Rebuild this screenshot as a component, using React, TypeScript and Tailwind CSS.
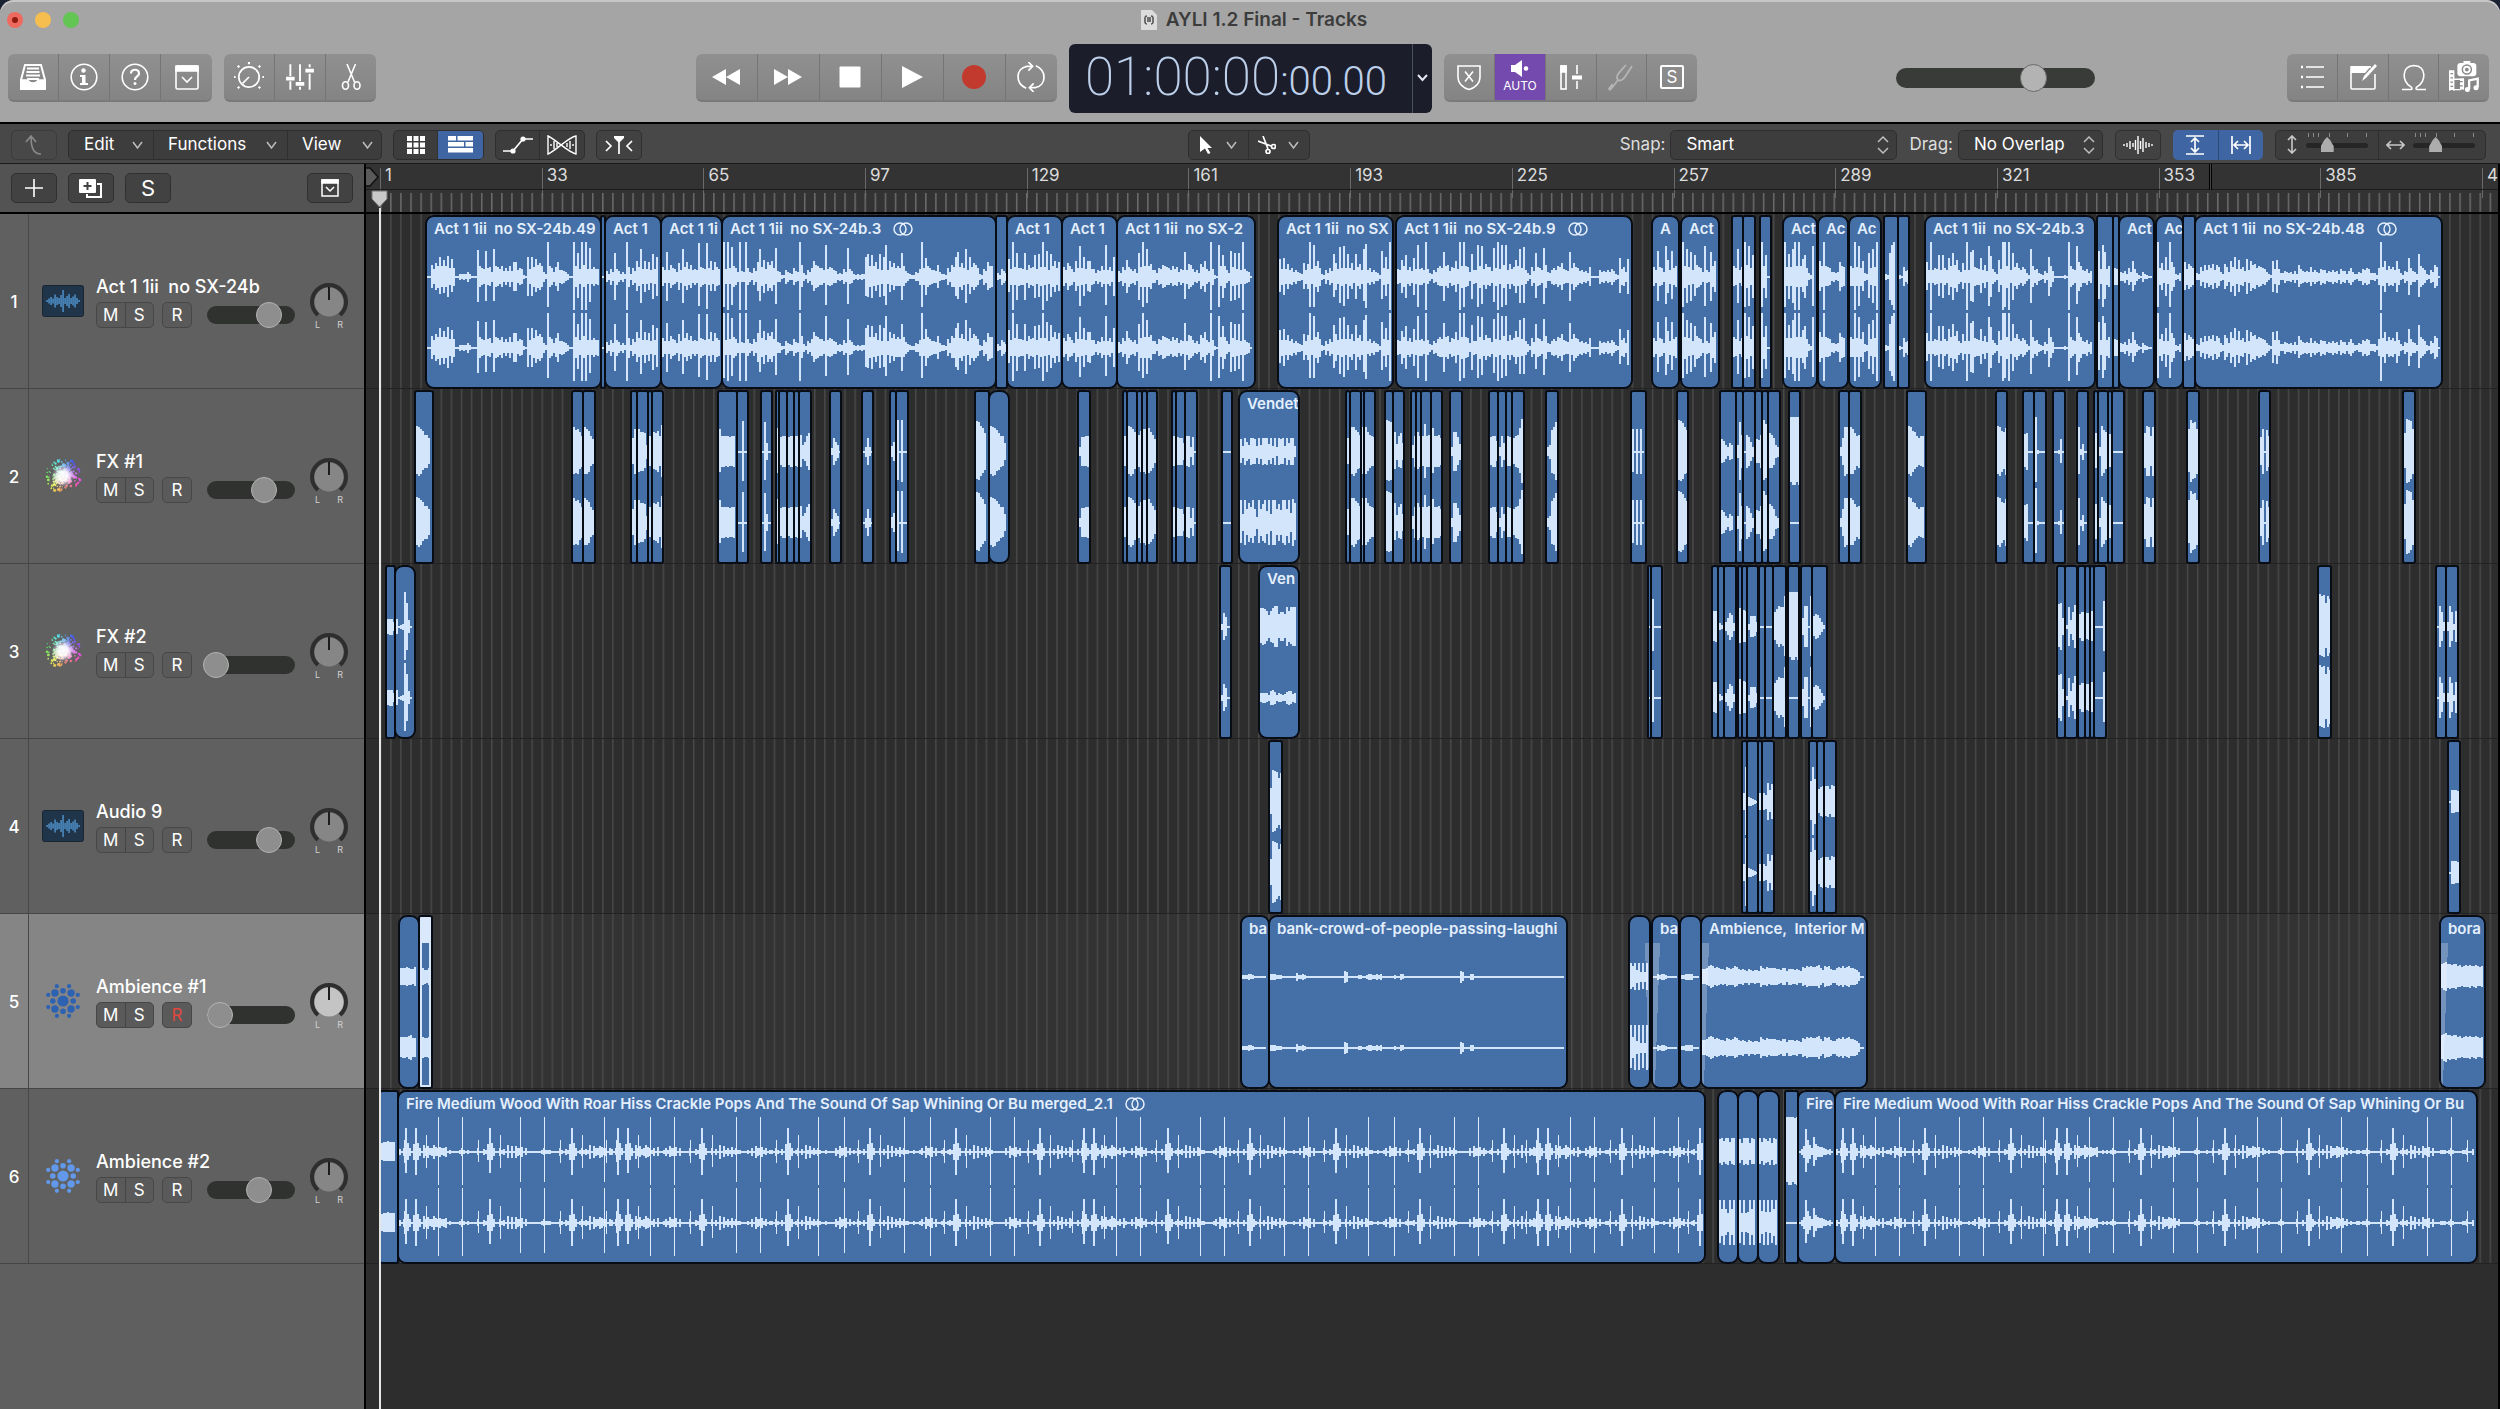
import React from 'react';

const BAR_WIDTH = 161.7 / 32;
const PANEL_WIDTH = 366;
const ORIGIN = 14;

type Region = {
  x: number;
  end: number;
  wave: string;
  right?: string;
  label?: string;
  stereo?: boolean;
  fade?: 'in' | 'out';
  fire?: boolean;
  selected?: boolean;
};

type TrackData = {
  name: string;
  icon: 'audio' | 'fx' | 'ambience';
  volume: number;
  selected?: boolean;
  rough?: boolean;
  regions: Region[];
};

// Wave strings are base 36 peak heights, spread evenly over the region.
const r = (x: number, end: number, wave: string, extra: Partial<Region> = {}): Region => ({ x, end, wave, ...extra });

const TRACKS: TrackData[] = [
  {
    name: 'Act 1 1ii  no SX-24b',
    icon: 'audio',
    volume: 76,
    rough: true,
    regions: [
      r(426, 601, '0cekhli1335' + '11r9qasab9bff92kkie5z9af751zozzta8', { label: 'Act 1 1ii  no SX-24b.49' }),
      r(601, 605, '1'),
      r(605, 661, '68o65z39gsgfnk', { label: 'Act 1' }),
      r(661, 722, 'apc8esfc8y9ygf8', { label: 'Act 1 1i' }),
      r(722, 996, 'zzu9z6z59fshfgt62749' + '6z479gb9wa9648t8333knmfnkwgebob4258zj97c539ckpeskec38fb', { label: 'Act 1 1ii  no SX-24b.3', stereo: true }),
      r(996, 1007, '484'),
      r(1007, 1062, 'izo9ocamnzqngf', { label: 'Act 1' }),
      r(1062, 1117, 'ae8gvkgg87bwak', { label: 'Act 1' }),
      r(1117, 1255, '6ah88ozsd79cb9ba8pd87dg6z2wm7qooz60', { label: 'Act 1 1ii  no SX-2' }),
      r(1278, 1393, 'ijd974edzwg379neuvnendsx974qkz', { label: 'Act 1 1ii  no SX' }),
      r(1396, 1632, '8hmajw9z479bpcagzzan7wvdatzwwdahsu4ao9t579be7pe976a11767' + '83jai', { label: 'Act 1 1ii  no SX-24b.9', stereo: true }),
      r(1652, 1679, 'aq9vhqb', { label: 'A' }),
      r(1681, 1719, 'zspmc9v7pg', { label: 'Act' }),
      r(1732, 1743, 'bsa'),
      r(1743, 1755, 'zvm'),
      r(1760, 1771, 'zm11'),
      r(1783, 1817, 'znszzim4v', { label: 'Act' }),
      r(1818, 1848, 'gza955fa', { label: 'Ac' }),
      r(1849, 1881, 'bzvg4osz', { label: 'Ac' }),
      r(1884, 1898, '3owz'),
      r(1898, 1909, '2a7'),
      r(1925, 2095, 'fz9mm9joh7ezpr9jcvl5hzzzoe9a4sb836kb1112z8vf786', { label: 'Act 1 1ii  no SX-24b.3' }),
      r(2097, 2113, 'qwpb'),
      r(2113, 2119, '98'),
      r(2119, 2154, '569g42521', { label: 'Act' }),
      r(2156, 2183, 'zekzf34', { label: 'Ac' }),
      r(2183, 2195, 'fd9'),
      r(2195, 2442, '4accdc5d5gkhaigdba83gh46456c66a7487676866935894' + '49zgbag46j95n937c1', { label: 'Act 1 1ii  no SX-24b.48', stereo: true }),
    ],
  },
  {
    name: 'FX #1',
    icon: 'fx',
    volume: 68,
    regions: [
      r(415, 433, 'qpnlhhe7'), r(572, 583, 'pnkg'), r(583, 595, 'plgd'),
      r(631, 637, 'en'), r(637, 648, 'nkj7'), r(648, 652, 'g'), r(652, 663, 'klgr'),
      r(718, 737, 'nggggfggg'), r(737, 748, '01v00'), r(761, 772, '0u900'),
      r(776, 779, 'o'), r(779, 787, 'fgg'), r(787, 794, 'fgg'), r(794, 799, 'gg'), r(799, 811, 'h7agj'),
      r(830, 841, '4ea70'), r(862, 873, '05e51'), r(890, 896, '6a'), r(896, 908, 'w0w00'),
      r(975, 989, 'vuqojg'), r(989, 1009, 'qpomjgg97'), r(1078, 1090, '5ffgg'),
      r(1123, 1127, 'gk'), r(1127, 1137, 'qpnk'), r(1137, 1142, 'hl'), r(1142, 1147, 'nn'), r(1147, 1157, 'okhd8'),
      r(1172, 1176, 'g'), r(1176, 1185, 'fe9'), r(1185, 1197, 'gg5f0'), r(1222, 1232, '000'),
      r(1239, 1299, 'd6ea7eed6e7eee8e6e5ede6e9ee6e', { right: 'n9nekgne6nejncn9nnejdnnenaokn', label: 'Vendet' }),
      r(1346, 1350, 'en'), r(1350, 1361, 'ppmkh'), r(1361, 1364, 'p'), r(1364, 1375, 'pkhgf'),
      r(1385, 1393, 'wvuh'), r(1393, 1404, 'k8gj9'), r(1411, 1416, '7g'), r(1416, 1421, 'kg'), r(1421, 1431, 'gsgh7'), r(1431, 1442, 'ogghe'),
      r(1450, 1462, '5kkf8'), r(1489, 1498, 'fggb'), r(1498, 1506, '5g92'), r(1506, 1512, 'gf'), r(1512, 1524, 'eghox'),
      r(1546, 1558, '57mpu'), r(1631, 1646, 'n0n0n0n'), r(1677, 1688, 'wvtpm'),
      r(1720, 1736, 'db7597h'), r(1736, 1743, '7uh'), r(1743, 1755, '0hfa5'), r(1755, 1762, 'dh'), r(1762, 1768, 'ws'), r(1768, 1780, 'jhe752'),
      r(1789, 1800, 'zzzzz', { right: '000000' }), r(1839, 1849, '5eppp'), r(1849, 1861, 'pnjgh'), r(1907, 1926, 'qplkgegg7'),
      r(1996, 2007, 'qplko'), r(2023, 2034, 'ij000'), r(2034, 2046, 'z2000'), r(2053, 2065, '002d0'), r(2077, 2088, 'p3810'),
      r(2094, 2098, 'j2'), r(2098, 2108, '5qmkg'), r(2108, 2112, 'ic'), r(2112, 2124, '000'),
      r(2143, 2155, 'jqpgp'), r(2187, 2199, 'nwtun'), r(2259, 2270, 'fn0mg'), r(2403, 2415, 'jxwvn'),
    ],
  },
  {
    name: 'FX #2',
    icon: 'fx',
    volume: 0,
    regions: [
      r(386, 395, '8885'), r(395, 415, '81239zo710'), r(1220, 1231, '3ea10'),
      r(1259, 1299, 'jjigccgjllddffdkcgkkkf', { right: '5555378635434677452', label: 'Ven' }),
      r(1648, 1651, '0'), r(1651, 1662, 's0000'),
      r(1712, 1718, 'gg'), r(1718, 1724, '42'), r(1724, 1736, '59ec4'),
      r(1738, 1742, 'jk'), r(1742, 1747, 'hg'), r(1747, 1758, '3bbb5'), r(1759, 1765, '00'), r(1765, 1773, '000'), r(1773, 1786, 'filkkv'),
      r(1788, 1799, 'zzzzz', { right: '00000' }), r(1801, 1812, '9ll1v'), r(1812, 1827, 'bdc952'),
      r(2057, 2065, 'no9q'), r(2065, 2077, '2k7fm'), r(2078, 2085, 'dff'), r(2085, 2090, 'ee'), r(2090, 2094, 'g'), r(2094, 2106, '000q'),
      r(2318, 2331, 'xwovs'), r(2436, 2446, '0lff5m'), r(2446, 2458, '5lf3gl'),
    ],
  },
  {
    name: 'Audio 9',
    icon: 'audio',
    volume: 75,
    regions: [
      r(1269, 1282, 'ewvuot'), r(1742, 1747, '9z'), r(1747, 1758, '54321'), r(1758, 1762, '9'), r(1762, 1774, '97jci8'),
      r(1809, 1817, 'lzn'), r(1817, 1824, 'dfg'), r(1824, 1836, 'ggdhgg'), r(2448, 2460, '1cccb'),
    ],
  },
  {
    name: 'Ambience #1',
    icon: 'ambience',
    volume: 6,
    selected: true,
    regions: [
      r(399, 419, '999a988a9', { right: 'bbbbcdaab' }), r(419, 432, '9779a', { selected: true, right: 'baabe' }),
      r(1241, 1269, '22320010', { label: 'ba' }),
      r(1269, 1567, '332010142301000000000' + '600020232330012131000100000000000610300000000101000000000000000', { label: 'bank-crowd-of-people-passing-laughi' }),
      r(1629, 1650, 'ebe7e5e5ee', { right: 'nbn7n5n5nn', fade: 'out' }),
      r(1652, 1679, '032320010', { label: 'ba', fade: 'in' }), r(1680, 1701, '2333000'),
      r(1701, 1867, '89bcba988a989b878787677b98a9998799688787a9bababc9bab879a9bab997510', { label: 'Ambience,  Interior M', fade: 'in' }),
      r(2440, 2485, 'defddcddbcadbcbcbbcbabb', { label: 'bora', fade: 'in' }),
    ],
  },
  {
    name: 'Ambience #2',
    icon: 'ambience',
    volume: 61,
    regions: [
      r(380, 398, '9aabaaaa9'),
      r(398, 1705, '', { fire: true, label: 'Fire Medium Wood With Roar Hiss Crackle Pops And The Sound Of Sap Whining Or Bu merged_2.1', stereo: true }),
      r(1718, 1738, 'debe8eaeee', { right: 'nenenanenn' }), r(1738, 1758, 'd9eebe9ede', { right: 'nananbnenn' }), r(1758, 1779, 'eaedbe9ede', { right: 'ncnbnbnenn' }),
      r(1785, 1798, 'zzzzyz', { right: '000' }),
      r(1798, 1835, '136nc74f865543231', { label: 'Fire' }),
      r(1835, 2477, '', { fire: true, label: 'Fire Medium Wood With Roar Hiss Crackle Pops And The Sound Of Sap Whining Or Bu' }),
    ],
  },
];

const FIRE_TALL = [
  437, 462, 520, 544, 604, 650, 674, 735, 759, 818, 843, 904, 929, 989, 1013, 1115, 1140, 1199, 1224, 1284, 1308, 1368,
  1393, 1453, 1477, 1569, 1594, 1653, 1678, 1874, 1899, 1958, 1983, 2043, 2088, 2113, 2172, 2197, 2256, 2281, 2341, 2366,
  2426, 2450,
];
const FIRE_CLUSTER = [
  406, 416, 489, 572, 618, 628, 702, 787, 870, 956, 1040, 1084, 1094, 1167, 1250, 1336, 1420, 1504, 1538, 1548, 1621,
  1699, 1843, 1853, 1925, 2010, 2056, 2067, 2140, 2224, 2308, 2393, 2478,
];
const CLUSTER_SHAPE: [number, number][] = [[-12, 12], [-6, 3], [-2, 8], [0, 24], [2, 9], [4, 4], [10, 17], [14, 3], [18, 7], [22, 6], [26, 4], [30, 5]];
const TALL_SHAPE: [number, number][] = [[-8, 4], [-4, 6], [-2, 4], [0, 35], [2, 5], [6, 4]];

function seeded(seed: number) {
  let s = seed * 7919 + 13;
  return () => {
    s = (s * 1103515245 + 12345) % 2147483648;
    return s / 2147483648;
  };
}

function firePeaks(region: Region, cols: number) {
  const rand = seeded(region.x);
  const peaks = Array.from({ length: cols }, () => (rand() > 0.75 ? 2 : 1));
  const stamp = (at: number, shape: [number, number][]) => {
    shape.forEach(([offset, amp]) => {
      const col = Math.round((at + offset - region.x) / 2) - 1;
      if (col >= 0 && col < cols) peaks[col] = Math.max(peaks[col], amp);
    });
  };
  FIRE_TALL.forEach((at, i) => stamp(at, i % 2 ? [[-2, 2], [0, 35], [2, 2]] : TALL_SHAPE));
  FIRE_CLUSTER.forEach((at) => stamp(at, CLUSTER_SHAPE));
  return peaks;
}

function wavePeaks(wave: string, cols: number, rough: boolean, seed: number) {
  const rand = seeded(seed);
  const perCell = Math.max(1, cols / wave.length);
  return Array.from({ length: cols }, (_, i) => {
    const cell = Math.min(wave.length - 1, Math.floor((i * wave.length) / cols));
    const amp = parseInt(wave[cell], 36);
    const first = Math.floor(((i - 1) * wave.length) / cols) !== cell;
    if (perCell <= 1 || first) return Math.max(1, amp);
    // quiet passages stay dense, loud ones fall off quickly after the peak
    const level = rough ? Math.min(amp, 13) * (0.5 + rand() * 0.4) : amp * (0.8 + rand() * 0.2);
    return Math.max(1, level);
  });
}

function Waveform({ region, rough }: { region: Region; rough: boolean }) {
  const width = region.end - region.x;
  const cols = Math.max(1, Math.floor((width - (width < 14 ? 1 : 3)) / 2));
  const left = region.fire ? firePeaks(region, cols) : wavePeaks(region.wave, cols, rough, region.x);
  const right = region.right ? wavePeaks(region.right, cols, rough, region.x) : left;
  // Fire crackles are hairline spikes over a thicker noise floor.
  const isThin = (amp: number) => !!region.fire && amp > 9 && amp !== 24;
  const draw = (peaks: number[], mid: number, thin: boolean) =>
    peaks
      .map((amp, i) => {
        const size = thin || !isThin(amp) ? amp : 4;
        if (thin && !isThin(amp)) return '';
        return `M${i * 2 + 1} ${mid - Math.round(size)}V${mid + Math.max(1, Math.round(size * (i % 3 ? 0.94 : 0.86)))}`;
      })
      .join('');
  return (
    <svg className="absolute left-0 top-0" width={width} height="170" shapeRendering="crispEdges" aria-hidden="true">
      <path d={draw(left, 60, false) + draw(right, 131, false)} stroke="#d3e5fb" strokeWidth="2" />
      {region.fire && <path d={draw(left, 60, true) + draw(right, 131, true)} stroke="#ddebfd" strokeWidth="1" />}
      {region.fade === 'in' && <path d="M0 26H7L2 168H0Z" fill="#fff" fillOpacity=".25" />}
      {region.fade === 'out' && <path d={`M${width - 6} 26H${width}V168H${width - 2}Z`} fill="#fff" fillOpacity=".25" />}
    </svg>
  );
}

function RegionBlock({ region, rough }: { region: Region; rough: boolean }) {
  const width = region.end - region.x;
  const shape = width > 19 ? 'rounded-lg' : 'rounded-xs';
  return (
    <div
      className={`absolute top-[2px] h-[172px] overflow-hidden border border-[#080c14] bg-[#456fa7] shadow-[0_0_0_1px_#080c14] ${shape}`}
      style={{ left: region.x - PANEL_WIDTH, width }}
    >
      <Waveform region={region} rough={rough} />
      {region.selected && (
        <div className="absolute inset-0 border-2 border-[#d9e8fb]">
          <div className="h-6 bg-[#d9e8fb]" />
        </div>
      )}
      {region.label && (
        <div className="relative flex h-6 items-center gap-3 overflow-hidden whitespace-pre pl-[7px] text-[15px] font-semibold text-[#e4effd]">
          <span>{region.label}</span>
          {region.stereo && (
            <svg className="shrink-0" width="20" height="14" viewBox="0 0 20 14" fill="none" stroke="currentColor" strokeWidth="1.5" aria-hidden="true">
              <circle cx="7" cy="7" r="6" />
              <circle cx="13" cy="7" r="6" />
            </svg>
          )}
        </div>
      )}
    </div>
  );
}

function AudioIcon() {
  const bars = [2, 5, 8, 5, 13, 8, 6, 12, 22, 6, 10, 14, 6, 9, 13, 6, 2];
  return (
    <svg width="42" height="32" viewBox="0 0 42 32" aria-hidden="true">
      <rect x=".5" y=".5" width="41" height="31" rx="2" fill="#20344a" stroke="#182534" />
      {bars.map((h, i) => (
        <rect key={i} x={4.5 + i * 2} y={16 - h / 2} width="1.1" height={h} fill="#5fb0f4" />
      ))}
    </svg>
  );
}

function FxIcon() {
  const rand = seeded(5);
  const dots = Array.from({ length: 230 }, () => {
    const angle = rand() * Math.PI * 2;
    const dist = 3 + rand() * 14;
    const hue = ((angle * 180) / Math.PI + 290) % 360;
    return { x: 21 + Math.cos(angle) * dist * 1.05, y: 18 + Math.sin(angle) * dist, size: 0.4 + rand(), hue, light: 92 - dist * 1.9 };
  });
  return (
    <svg width="42" height="36" viewBox="0 0 42 36" aria-hidden="true">
      <defs>
        <radialGradient id="burst">
          <stop offset="0" stopColor="#fff" />
          <stop offset=".45" stopColor="#fff" stopOpacity=".85" />
          <stop offset="1" stopColor="#e9c7ff" stopOpacity="0" />
        </radialGradient>
      </defs>
      {dots.map((d, i) => (
        <circle key={i} cx={d.x} cy={d.y} r={d.size} fill={`hsl(${d.hue} 75% ${d.light}%)`} />
      ))}
      <circle cx="21" cy="18" r="11" fill="url(#burst)" />
    </svg>
  );
}

function AmbienceIcon({ color }: { color: string }) {
  const ring = [0, 1, 2, 3, 4, 5, 6, 7];
  return (
    <svg width="42" height="36" viewBox="-21 -18 42 36" fill={color} aria-hidden="true">
      <circle r="5.6" />
      {ring.map((i) => {
        const a = (i * Math.PI) / 4;
        const b = a + Math.PI / 8;
        const dist = i % 2 ? 11.4 : 10.2;
        return (
          <React.Fragment key={i}>
            <circle cx={Math.cos(a) * dist} cy={Math.sin(a) * dist} r={i % 2 ? 3.7 : 2.8} />
            <circle cx={Math.cos(b) * 16} cy={Math.sin(b) * 16} r="2.1" />
          </React.Fragment>
        );
      })}
    </svg>
  );
}

function PanKnob({ bright }: { bright?: boolean }) {
  return (
    <div className="mt-2 flex w-[38px] flex-col items-center">
      <svg width="38" height="38" viewBox="0 0 38 38" role="img" aria-label="Pan">
        <path d="M8 33A17 17 0 1 1 30 33" fill="none" stroke="#2e2e2e" strokeWidth="4" />
        <circle cx="19" cy="20" r="14.5" fill={bright ? '#c4c4c4' : '#868686'} />
        <path d="M19 5V18" stroke="#1c1c1c" strokeWidth="2" />
      </svg>
      <div className="flex w-7 justify-between text-[9px] leading-[9px] text-[#d0d0d0]">
        <span>L</span>
        <span>R</span>
      </div>
    </div>
  );
}

function TrackHeader({ track, index }: { track: TrackData; index: number }) {
  return (
    <div className={`flex h-[175px] border-b border-[#454545] ${track.selected ? 'bg-[#858585]' : 'bg-[#606060]'}`}>
      <div className="flex w-[29px] shrink-0 items-center justify-center border-r border-[#484848] pt-1 text-[17px] font-medium text-white">
        {index + 1}
      </div>
      <div className="flex flex-1 items-center pl-[13px]">
        {track.icon === 'audio' && <AudioIcon />}
        {track.icon === 'fx' && <FxIcon />}
        {track.icon === 'ambience' && <AmbienceIcon color={track.selected ? '#2d62b3' : '#6198ea'} />}
        <div className="ml-3 w-[214px]">
          <div className="h-[27px] whitespace-pre text-[18px] leading-[24px] font-medium text-white">{track.name}</div>
          <div className="flex items-center">
            <div className="flex h-[26px] w-[58px] divide-x divide-[#444] overflow-hidden rounded-[5px] border border-[#474747] bg-[#5a5a5a] text-[17px] text-white">
              <button className="flex-1" aria-label={`Mute ${track.name}`}>M</button>
              <button className="flex-1" aria-label={`Solo ${track.name}`}>S</button>
            </div>
            <button
              className={`ml-2 h-[26px] w-[30px] rounded-[5px] border border-[#474747] bg-[#5a5a5a] text-[17px] ${track.selected ? 'text-[#e0483f]' : 'text-white'}`}
              aria-label={`Record enable ${track.name}`}
            >
              R
            </button>
            <div className="ml-[15px] flex h-[18px] w-[88px] items-center rounded-full bg-[#30322f]">
              <input
                type="range"
                defaultValue={track.volume}
                aria-label={`Volume ${track.name}`}
                className="-mx-1 h-[26px] w-24 shrink-0 appearance-none bg-transparent [&::-webkit-slider-thumb]:h-[26px] [&::-webkit-slider-thumb]:w-[26px] [&::-webkit-slider-thumb]:appearance-none [&::-webkit-slider-thumb]:rounded-full [&::-webkit-slider-thumb]:border [&::-webkit-slider-thumb]:border-[#b4b4b4] [&::-webkit-slider-thumb]:bg-[#8e8e8e]"
              />
            </div>
          </div>
        </div>
        <PanKnob bright={track.selected} />
      </div>
    </div>
  );
}

function Icon({ children, size = 28 }: { children: React.ReactNode; size?: number }) {
  return (
    <svg width={size} height={size} viewBox="0 0 28 28" fill="none" stroke="currentColor" strokeWidth="1.6" aria-hidden="true">
      {children}
    </svg>
  );
}

type Tool = { label: string; icon: React.ReactNode; active?: boolean; dim?: boolean; width?: string };

function Group({ items }: { items: Tool[] }) {
  return (
    <div className="flex h-12 shrink-0 divide-x divide-[#757575] overflow-hidden rounded-md border-b-2 border-[#7a7a7a] bg-linear-to-b from-[#909090] to-[#848484] text-white">
      {items.map((item) => (
        <button
          key={item.label}
          aria-label={item.label}
          className={`flex flex-col items-center justify-center ${item.width ?? 'w-[51px]'} ${item.active ? 'bg-[#744aae]' : ''} ${item.dim ? 'text-[#b4b4b4]' : ''}`}
        >
          {item.icon}
        </button>
      ))}
    </div>
  );
}

const leftTools: Tool[] = [
  {
    label: 'Library',
    icon: (
      <Icon>
        <path d="M6 2H22L26 17V26H2V17Z" strokeWidth="2" />
        <path d="M2 17H9C10 21 18 21 19 17H26V26H2Z" fill="currentColor" />
        <path d="M8 5.500H20M7.500 9H20.500M7 12.500H21M8 16H20" strokeWidth="2" />
      </Icon>
    ),
  },
  {
    label: 'Inspector',
    icon: (
      <Icon>
        <circle cx="14" cy="14" r="12.800" />
        <circle cx="13.500" cy="7.500" r="2.200" fill="currentColor" stroke="none" />
        <path d="M10 12H15.500V20H18V22H10V20H12V14H10Z" fill="currentColor" stroke="none" />
      </Icon>
    ),
  },
  {
    label: 'Quick Help',
    icon: (
      <Icon>
        <circle cx="14" cy="14" r="12.800" />
        <path d="M10 10.500C10 5.500 18 5.500 18 10.500C18 13.500 14 13.500 14 17" strokeWidth="2.200" />
        <circle cx="14" cy="20.500" r="1.500" fill="currentColor" stroke="none" />
      </Icon>
    ),
  },
  {
    label: 'Toolbar',
    icon: (
      <Icon>
        <rect x="3" y="3" width="22" height="23" rx="1.500" />
        <path d="M3 3H25V8H3Z" fill="currentColor" />
        <path d="M9 14L14 19L19 14" />
      </Icon>
    ),
  },
];

const viewTools: Tool[] = [
  {
    label: 'Smart Controls',
    icon: (
      <Icon size={30}>
        <circle cx="14" cy="14" r="9.500" />
        <path d="M14 14L8 20" />
        <path d="M14 0V2M1.500 14H0M28 14H26.500M3.500 3.500L5 5M24.500 3.500L23 5M3.500 24.500L5 23M24.500 24.500L23 23" strokeWidth="2" />
      </Icon>
    ),
  },
  {
    label: 'Mixer',
    icon: (
      <Icon size={30}>
        <path d="M5 2V13M5 18V26M14 2V18M14 23V26M23 2V5M23 11V26" strokeWidth="1.800" />
        <path d="M1 15.500H9M10 20.500H18M19 8H27" strokeWidth="3.500" />
      </Icon>
    ),
  },
  {
    label: 'Editors',
    width: 'w-[50px]',
    icon: (
      <Icon>
        <path d="M10 1L17.500 19M18.500 1L11 19" />
        <ellipse cx="8.500" cy="22.500" rx="3" ry="3.800" />
        <ellipse cx="20" cy="22.500" rx="3" ry="3.800" />
      </Icon>
    ),
  },
];

const transport: Tool[] = [
  { label: 'Rewind', width: 'w-[62px]', icon: <Icon><path d="M14 6V22L0 14ZM28 6V22L14 14Z" fill="currentColor" stroke="none" /></Icon> },
  { label: 'Forward', width: 'w-[62px]', icon: <Icon><path d="M0 6V22L14 14ZM14 6V22L28 14Z" fill="currentColor" stroke="none" /></Icon> },
  { label: 'Stop', width: 'w-[62px]', icon: <Icon><rect x="3.500" y="3.500" width="21" height="21" rx="1" fill="currentColor" stroke="none" /></Icon> },
  { label: 'Play', width: 'w-[62px]', icon: <Icon><path d="M4 3V25L25 14Z" fill="currentColor" stroke="none" /></Icon> },
  { label: 'Record', width: 'w-[62px]', icon: <Icon><circle cx="14" cy="14" r="12" fill="#c23a2e" stroke="none" /></Icon> },
  {
    label: 'Cycle',
    icon: (
      <Icon size={30}>
        <path d="M9.500 24.500C-1 20 -.5 6 10 4H15M18.500 3.500C29 8 28.500 22 18 24H13" />
        <path d="M11.500 0L15.500 4L11.500 8M16.500 20L12.500 24L16.500 28" />
      </Icon>
    ),
  },
];

const modeTools: Tool[] = [
  {
    label: 'Replace',
    icon: (
      <Icon>
        <path d="M3 3H25V14C25 21 19 25 14 26.500C9 25 3 21 3 14Z" />
        <path d="M10 8.500L18 18.500M18 8.500L10 18.500" />
      </Icon>
    ),
  },
  {
    label: 'Auto input monitoring',
    active: true,
    icon: (
      <>
        <svg width="22" height="17" viewBox="0 0 22 17" fill="currentColor" aria-hidden="true">
          <path d="M2 5H6L13 0V17L6 12H2Z" />
          <circle cx="17" cy="8.500" r="2.300" />
        </svg>
        <span className="text-[12px] leading-[18px]">AUTO</span>
      </>
    ),
  },
  {
    label: 'Pre fader',
    icon: (
      <Icon>
        <rect x="4" y="3" width="5" height="23" />
        <path d="M4 3H9V9H4Z" fill="currentColor" />
        <path d="M20 2V11M20 18V26" />
        <path d="M15 14.500H25" strokeWidth="4" />
      </Icon>
    ),
  },
  {
    label: 'Tuner',
    dim: true,
    width: 'w-[50px]',
    icon: (
      <Icon>
        <path d="M4 26L11 17M11 17C8 13 11 11 19 2M11 17C15 19 17 16 25 3" strokeWidth="1.800" />
        <path d="M2 27L6 21.500" strokeWidth="3" />
      </Icon>
    ),
  },
  {
    label: 'Solo',
    width: 'w-[50px]',
    icon: (
      <span className="flex h-6 w-6 items-center justify-center rounded-xs border-2 border-white text-[17px] leading-[17px]">S</span>
    ),
  },
];

const rightTools: Tool[] = [
  {
    label: 'List Editors',
    icon: (
      <Icon>
        <path d="M8 4H26M8 14H26M8 24H26" />
        <path d="M3 4H5M3 14H5M3 24H5" strokeWidth="2.500" />
      </Icon>
    ),
  },
  {
    label: 'Note Pads',
    icon: (
      <Icon>
        <path d="M26 11V25Q26 26 25 26H3Q2 26 2 25V4H22" />
        <path d="M2 3H22L16 10H2Z" fill="currentColor" stroke="none" />
        <path d="M13 18L15 13L26 1L28 3L17 15Z" fill="currentColor" stroke="none" />
      </Icon>
    ),
  },
  {
    label: 'Apple Loops',
    width: 'w-[50px]',
    icon: (
      <Icon>
        <path d="M2 26.500H10.500C12.500 26.500 12.500 24.500 10.500 23.500C2 19 1 3 14 2.500C27 3 26 19 17.500 23.500C15.500 24.500 15.500 26.500 17.500 26.500H26" />
      </Icon>
    ),
  },
  {
    label: 'Browsers',
    width: 'w-[50px]',
    icon: (
      <Icon size={32}>
        <rect x="9" y="2.500" width="15" height="10" rx="2" fill="currentColor" />
        <circle cx="16.500" cy="7.500" r="3.800" fill="#8a8a8a" stroke="#8a8a8a" />
        <circle cx="16.500" cy="7.500" r="2.500" />
        <path d="M13.500 1H19.500" strokeWidth="2.500" />
        <path d="M3 8V26M12 15V26" strokeWidth="3" strokeDasharray="2.500 1.200" />
        <path d="M1.500 8V26M5 8V26M5 16H11M5 25H11M13.500 15V25" strokeWidth="1.200" />
        <path d="M18.500 24.500V17L26 15.500V23" strokeWidth="2" />
        <circle cx="17" cy="25" r="2.200" fill="currentColor" stroke="none" />
        <circle cx="24.500" cy="23.500" r="2.200" fill="currentColor" stroke="none" />
      </Icon>
    ),
  },
];

function Chevron() {
  return (
    <svg width="11" height="8" viewBox="0 0 11 8" fill="none" stroke="#bdbdbd" strokeWidth="1.500" aria-hidden="true">
      <path d="M1 1L5.500 7L10 1" />
    </svg>
  );
}

const smallButton = 'flex h-[30px] w-[46px] shrink-0 items-center justify-center rounded-[5px] border border-[#303030] bg-[#424242] text-white';
const smallGroup = 'flex h-[30px] shrink-0 divide-x divide-[#303030] overflow-hidden rounded-[5px] border border-[#2e2e2e] bg-[#3d3d3d] text-white';

function SelectBox({ id, label, value, options, width }: { id: string; label: string; value: string; options: string[]; width: string }) {
  return (
    <div className="flex items-center gap-[5px] text-[17px] text-[#dedede]">
      <label htmlFor={id}>{label}</label>
      <div className={`relative ${width}`}>
        <select id={id} defaultValue={value} className="h-[30px] w-full appearance-none rounded-[5px] border border-[#2e2e2e] bg-[#3d3d3d] pl-[15px] text-[17px] text-white">
          {options.map((option) => (
            <option key={option}>{option}</option>
          ))}
        </select>
        <svg className="pointer-events-none absolute right-2 top-[6px]" width="12" height="18" viewBox="0 0 12 18" fill="none" stroke="#bdbdbd" strokeWidth="1.500" aria-hidden="true">
          <path d="M1 6L6 1L11 6M1 12L6 17L11 12" />
        </svg>
      </div>
    </div>
  );
}

function ZoomSlider({ label, value, children }: { label: string; value: number; children: React.ReactNode }) {
  return (
    <div className="flex flex-1 items-center justify-center gap-2">
      {children}
      <div className="relative h-[28px] w-[62px]">
        <svg className="absolute left-0 top-[2px]" width="62" height="5" stroke="#8a8a8a" shapeRendering="crispEdges" aria-hidden="true">
          <path d="M2 0V4M7 0V4M12 0V4M23 0V4M41 0V4M60 0V4" />
        </svg>
        <div className="absolute inset-x-0 top-3 h-[5px] rounded-full bg-[#262626]" />
        <input
          type="range"
          aria-label={label}
          defaultValue={value}
          className="absolute inset-0 h-[28px] w-full appearance-none bg-transparent [&::-webkit-slider-thumb]:h-[15px] [&::-webkit-slider-thumb]:w-[13px] [&::-webkit-slider-thumb]:appearance-none [&::-webkit-slider-thumb]:bg-[#adadad] [&::-webkit-slider-thumb]:[clip-path:polygon(50%_0,72%_20%,100%_62%,100%_100%,0_100%,0_62%,28%_20%)]"
        />
      </div>
    </div>
  );
}

function TopBar() {
  return (
    <header className="h-[124px] rounded-t-[14px] border-b-2 border-black bg-[#a5a5a5] shadow-[inset_0_2px_0_#c6c6c6]">
      <div className="flex h-[43px] items-center pb-1">
        <div className="flex flex-1 gap-3 pl-[7px]">
          <button aria-label="Close" className="flex h-4 w-4 items-center justify-center rounded-full bg-[#ee6a5f]">
            <span className="h-[6px] w-[6px] rounded-full bg-[#8e1a10]" />
          </button>
          <button aria-label="Minimize" className="h-4 w-4 rounded-full bg-[#f5be4f]" />
          <button aria-label="Zoom" className="h-4 w-4 rounded-full bg-[#62c554]" />
        </div>
        <h1 className="flex items-center gap-2 text-[19px] leading-[20px] font-semibold text-[#3c3c3c]">
          <svg width="18" height="20" viewBox="0 0 18 20" aria-hidden="true">
            <path d="M1 0H12L17 5V20H1Z" fill="#dcdcdc" />
            <path d="M7 6Q4.500 6 5 10Q4.500 14 7 14M11 6Q13.500 6 13 10Q13.500 14 11 14M8 7V12M10 7V12" fill="none" stroke="#555" strokeWidth="1.600" />
          </svg>
          AYLI 1.2 Final - Tracks
        </h1>
        <div className="flex-1" />
      </div>
      <div className="flex h-[70px] items-center pl-2 pr-[11px]">
        <div className="flex gap-3">
          <Group items={leftTools} />
          <Group items={viewTools} />
        </div>
        <div className="grow-45" />
        <div className="flex items-center gap-3">
          <Group items={transport} />
          <div className="flex h-[69px] w-[363px] divide-x divide-[#4b5060] rounded-md bg-[#1b1d2b] font-['Roboto','Inter',sans-serif] text-[#bdd0ea]">
            <div className="flex flex-1 items-baseline pl-4 tabular-nums">
              <span className="text-[53px] leading-[66px] font-extralight">01:00:00</span>
              <span className="text-[40px] leading-[66px] font-light">:00.00</span>
            </div>
            <button aria-label="Display mode" className="flex w-[19px] items-center justify-center">
              <svg width="11" height="8" viewBox="0 0 11 8" fill="none" stroke="#e4e8f0" strokeWidth="2" aria-hidden="true">
                <path d="M1 1L5.500 6L10 1" />
              </svg>
            </button>
          </div>
          <Group items={modeTools} />
        </div>
        <div className="grow-28" />
        <input
          type="range"
          aria-label="Master volume"
          defaultValue={72}
          className="h-[20px] w-[199px] appearance-none rounded-full bg-[#383b38] [&::-webkit-slider-thumb]:h-[28px] [&::-webkit-slider-thumb]:w-[27px] [&::-webkit-slider-thumb]:appearance-none [&::-webkit-slider-thumb]:rounded-full [&::-webkit-slider-thumb]:border [&::-webkit-slider-thumb]:border-[#6a6a6a] [&::-webkit-slider-thumb]:bg-[#b3b3b3]"
        />
        <div className="grow-27" />
        <Group items={rightTools} />
      </div>
    </header>
  );
}

function MenuBar() {
  return (
    <div className="flex h-10 items-center border-b border-[#1a1a1a] bg-[#484848] pl-[11px] pr-[14px] pt-[2px]">
      <div className="flex flex-1 gap-[11px]">
        <button aria-label="Back" className="flex h-[30px] w-[46px] items-center justify-center rounded-[5px] border border-[#3c3c3c] text-[#8b8b8b]">
          <svg width="18" height="20" viewBox="0 0 18 20" fill="none" stroke="currentColor" strokeWidth="1.600" aria-hidden="true">
            <path d="M1 7L6 1L11 7M6 1C6 12 8 19 16 19" />
          </svg>
        </button>
        <div className={`${smallGroup} text-[17px]`}>
          <button className="flex w-[85px] items-center justify-between pl-[15px] pr-[10px]">Edit<Chevron /></button>
          <button className="flex w-[134px] items-center justify-between pl-[14px] pr-[10px]">Functions<Chevron /></button>
          <button className="flex w-[93px] items-center justify-between pl-[14px] pr-[8px]">View<Chevron /></button>
        </div>
        <div className={smallGroup}>
          <button aria-label="Live Loops grid" className="flex w-[44px] items-center justify-center">
            <svg width="18" height="18" fill="currentColor" aria-hidden="true">
              <path d="M0 0H5V5H0ZM6.500 0H11.500V5H6.500ZM13 0H18V5H13ZM0 6.500H5V11.500H0ZM6.500 6.500H11.500V11.500H6.500ZM13 6.500H18V11.500H13ZM0 13H5V18H0ZM6.500 13H11.500V18H6.500ZM13 13H18V18H13Z" />
            </svg>
          </button>
          <button aria-label="Tracks view" className="flex w-[45px] items-center justify-center bg-[#3f66a2]">
            <svg width="25" height="17" fill="currentColor" aria-hidden="true">
              <path d="M0 0H8V4.500H0ZM9.500 0H25V4.500H9.500ZM0 6H16V10.500H0ZM17.500 6H25V10.500H17.500ZM0 12H25V16.500H0Z" />
            </svg>
          </button>
        </div>
        <div className={smallGroup}>
          <button aria-label="Automation" className="flex w-[44px] items-center justify-center">
            <svg width="32" height="18" viewBox="0 0 32 18" fill="none" stroke="currentColor" strokeWidth="1.700" aria-hidden="true">
              <path d="M1 15H11L21 3H31" />
              <circle cx="11" cy="15" r="2.600" fill="currentColor" stroke="none" />
              <circle cx="21" cy="3" r="2.600" fill="currentColor" stroke="none" />
            </svg>
          </button>
          <button aria-label="Flex" className="flex w-[44px] items-center justify-center">
            <svg width="30" height="20" viewBox="0 0 30 20" fill="none" stroke="currentColor" strokeWidth="1.400" aria-hidden="true">
              <path d="M1 1C8 4 22 18 29 19V1C22 2 8 16 1 19Z" />
              <path d="M4 9V11M7 6V14M10 8V12M20 8V12M23 6V14M26 9V11" />
            </svg>
          </button>
        </div>
        <button aria-label="Catch playhead" className={smallButton}>
          <svg width="28" height="20" viewBox="0 0 28 20" fill="none" stroke="currentColor" strokeWidth="1.700" aria-hidden="true">
            <path d="M1 6L6 11L1 16M27 6L22 11L27 16M14 6V19" />
            <path d="M9 1H19V3L15 7H13L9 3Z" fill="currentColor" stroke="none" />
          </svg>
        </button>
      </div>
      <div className={smallGroup}>
        <button aria-label="Pointer tool" className="flex w-[60px] items-center justify-center gap-[14px]">
          <svg width="12" height="18" viewBox="0 0 12 18" fill="currentColor" aria-hidden="true">
            <path d="M0 0L12 12H7.500L10.500 17L8 18L5 12.500L0 16Z" />
          </svg>
          <Chevron />
        </button>
        <button aria-label="Scissors tool" className="flex w-[60px] items-center justify-center gap-3">
          <svg width="18" height="18" viewBox="0 0 18 18" fill="none" stroke="currentColor" strokeWidth="1.700" aria-hidden="true">
            <path d="M5 0L10 13M0 5L13 10" />
            <circle cx="10" cy="15.500" r="2" />
            <circle cx="15.500" cy="10.500" r="2" />
          </svg>
          <Chevron />
        </button>
      </div>
      <div className="flex flex-1 items-center justify-end gap-3">
        <SelectBox id="snap" label="Snap:" value="Smart" options={['Smart', 'Bar', 'Beat', 'Off']} width="w-[227px]" />
        <SelectBox id="drag" label="Drag:" value="No Overlap" options={['No Overlap', 'Overlap', 'X-Fade']} width="w-[145px]" />
        <button aria-label="Waveform zoom" className={smallButton}>
          <svg width="30" height="20" viewBox="0 0 30 20" stroke="currentColor" strokeWidth="1.400" aria-hidden="true">
            <path d="M1 9V11M4 8V12M7 6V14M10 8V12M12.500 5V15M15 1V19M17.500 6V14M20 3V17M23 7V13M26 8V12M29 9V11" />
          </svg>
        </button>
        <div className="flex h-[30px] w-[90px] divide-x divide-[#2b4a7a] overflow-hidden rounded-[5px] bg-[#3f66a2] text-white">
          <button aria-label="Vertical auto zoom" className="flex flex-1 items-center justify-center">
            <svg width="20" height="20" viewBox="0 0 20 20" fill="none" stroke="currentColor" strokeWidth="1.700" aria-hidden="true">
              <path d="M1 1H19M1 19H19M10 3V17M6 7L10 3L14 7M6 13L10 17L14 13" />
            </svg>
          </button>
          <button aria-label="Horizontal auto zoom" className="flex flex-1 items-center justify-center">
            <svg width="20" height="20" viewBox="0 0 20 20" fill="none" stroke="currentColor" strokeWidth="1.700" aria-hidden="true">
              <path d="M1 1V19M19 1V19M3 10H17M7 6L3 10L7 14M13 6L17 10L13 14" />
            </svg>
          </button>
        </div>
        <div className="flex h-[30px] w-[211px] divide-x divide-[#303030] rounded-[5px] border border-[#2e2e2e] bg-[#3d3d3d] pr-1">
          <ZoomSlider label="Vertical zoom" value={30}>
            <svg width="12" height="19" viewBox="0 0 12 19" fill="none" stroke="#c8c8c8" strokeWidth="1.600" aria-hidden="true">
              <path d="M6 1V18M2 5L6 1L10 5M2 14L6 18L10 14" />
            </svg>
          </ZoomSlider>
          <ZoomSlider label="Horizontal zoom" value={34}>
            <svg width="19" height="12" viewBox="0 0 19 12" fill="none" stroke="#c8c8c8" strokeWidth="1.600" aria-hidden="true">
              <path d="M1 6H18M5 2L1 6L5 10M14 2L18 6L14 10" />
            </svg>
          </ZoomSlider>
        </div>
      </div>
    </div>
  );
}

function TrackToolbar() {
  return (
    <div className="flex h-[50px] items-center gap-[11px] border-b-2 border-black bg-[#535353] pl-[11px] pr-[11px]">
      <button aria-label="New track" className={smallButton}>
        <svg width="18" height="18" stroke="currentColor" strokeWidth="1.600" aria-hidden="true"><path d="M9 0V18M0 9H18" /></svg>
      </button>
      <button aria-label="Duplicate track" className={smallButton}>
        <svg width="24" height="19" viewBox="0 0 24 19" fill="none" aria-hidden="true">
          <path d="M18 5H22V18H8V15" stroke="currentColor" strokeWidth="2" />
          <rect x="0" y="0" width="17" height="14" rx="1" fill="currentColor" />
          <path d="M8.500 3V11M4.500 7H12.500" stroke="#424242" strokeWidth="2" />
        </svg>
      </button>
      <button aria-label="Global solo" className={`${smallButton} text-[22px] leading-[22px]`}>S</button>
      <button aria-label="Header options" className={`${smallButton} ml-auto`}>
        <svg width="18" height="18" viewBox="0 0 18 18" fill="none" stroke="currentColor" strokeWidth="1.500" aria-hidden="true">
          <path d="M1 1H17V17H1ZM5 8L9 12L13 8" />
          <path d="M1 1H17V4H1Z" fill="currentColor" />
        </svg>
      </button>
    </div>
  );
}

const gridLines = (color: string) => ({
  backgroundImage: `linear-gradient(90deg, ${color} 1px, transparent 2px)`,
  backgroundSize: `${BAR_WIDTH * 2}px 100%`,
});

function Ruler() {
  const marks = Array.from({ length: 14 }, (_, i) => 1 + i * 32);
  return (
    <div className="relative h-[50px] overflow-hidden border-b-2 border-black bg-[#333]">
      <svg className="absolute left-0 top-[3px]" width="13" height="20" viewBox="0 0 13 20" fill="#5a5a5a" stroke="#111" strokeWidth="1.500" aria-hidden="true">
        <path d="M0 1H4L12 10L4 19H0" />
      </svg>
      <div className="flex pl-[14px] pt-1">
        {marks.map((bar) => (
          <div key={bar} className="h-[30px] shrink-0 border-l border-[#6a6a6a] pl-1 text-[17px] leading-[14px] text-[#dcdcdc]" style={{ width: BAR_WIDTH * 32 }}>
            {bar}
          </div>
        ))}
      </div>
      <div className="absolute inset-x-0 top-[25px] h-px bg-[#1c1c1c]" />
      <div className="absolute left-[1843px] top-0 h-[26px] w-[3px] border-x border-black bg-[#444]" />
      <div className="absolute bottom-0 left-[14px] right-0 h-[19px]" style={gridLines('#6b6b6b')} />
    </div>
  );
}

function Playhead() {
  return (
    <div className="pointer-events-none absolute bottom-0 left-[5px] top-[26px] flex w-[17px] flex-col items-center">
      <svg width="17" height="18" viewBox="0 0 17 18" aria-hidden="true">
        <path d="M1 1H16V9L8.500 17L1 9Z" fill="#c9c9c9" stroke="#777" />
      </svg>
      <div className="w-[2px] flex-1 bg-[#e6e6e6]" />
    </div>
  );
}

function App() {
  return (
    <div className="flex min-h-screen flex-col bg-[#1a2233] font-['Inter','Liberation_Sans',sans-serif]">
      <TopBar />
      <MenuBar />
      <main className="flex flex-1 border-r-2 border-black bg-[#2d2d2d]">
        <section className="w-[366px] shrink-0 border-r-2 border-black bg-[#5f5f5f]">
          <TrackToolbar />
          {TRACKS.map((track, i) => (
            <TrackHeader key={track.name} track={track} index={i} />
          ))}
        </section>
        <section className="relative min-w-0 flex-1 overflow-hidden">
          <Ruler />
          {TRACKS.map((track) => (
            <div key={track.name} className={`relative h-[175px] border-b border-[#222] ${track.selected ? 'bg-[#333]' : 'bg-[#2d2d2d]'}`}>
              <div className="absolute inset-y-0 right-0" style={{ left: ORIGIN, ...gridLines('#484848') }} />
              {track.regions.map((region) => (
                <RegionBlock key={region.x} region={region} rough={!!track.rough} />
              ))}
            </div>
          ))}
          <Playhead />
        </section>
      </main>
    </div>
  );
}

export default App;
